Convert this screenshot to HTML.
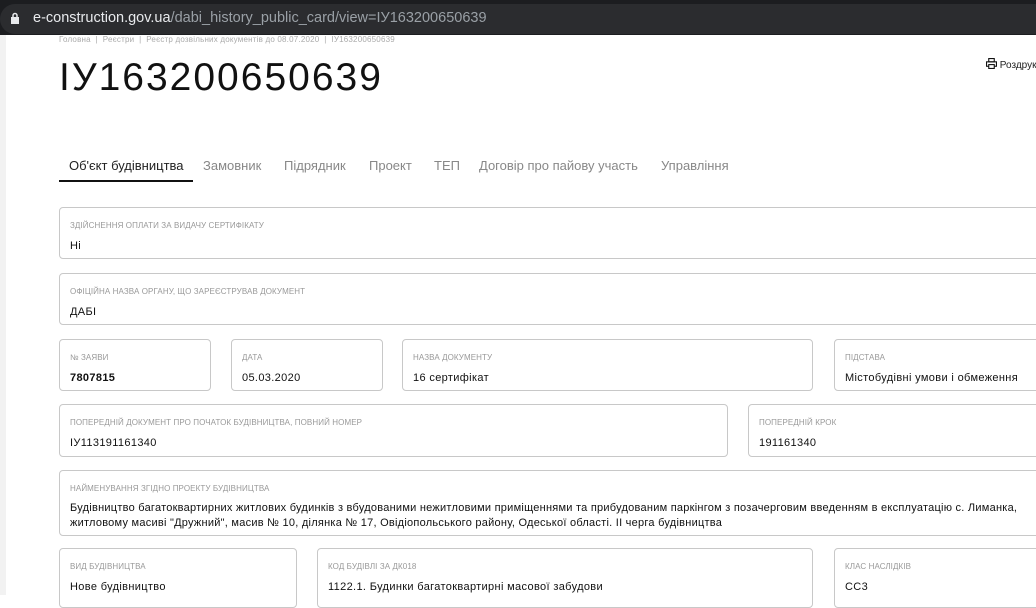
<!DOCTYPE html>
<html><head><meta charset="utf-8"><style>
*{margin:0;padding:0;box-sizing:border-box}
body{width:1036px;height:595px;overflow:hidden;background:#fff;font-family:"Liberation Sans",sans-serif;position:relative;color:#111}
.bar{position:absolute;left:0;top:0;width:1036px;height:35px;background:#1c1d20}
.url{position:absolute;left:0;top:4px;width:1036px;height:30px;background:#2b2c2f;border-radius:15px 0 0 15px}
.url span{position:absolute;left:33px;top:6px;font-size:14.5px;color:#e8eaed}
.url span i{font-style:normal;color:#9aa0a6}
.side{position:absolute;left:0;top:35px;width:6px;height:560px;background:#f2f2f2}
.bc{position:absolute;left:59px;top:35px;font-size:8px;color:#aaa;letter-spacing:0.2px;white-space:nowrap}
h1{position:absolute;left:59px;top:56px;font-size:39px;font-weight:400;letter-spacing:2px;color:#111;white-space:nowrap}
.pr{position:absolute;left:986px;top:58px;font-size:10px;color:#222;white-space:nowrap}
.tabs{position:absolute;top:158px;left:69px;font-size:13px;color:#888}
.tabs span{position:absolute;white-space:nowrap}
.ul{position:absolute;left:59px;top:180px;width:134px;height:2px;background:#111}
.b{position:absolute;border:1px solid #c8c8c8;border-radius:4px;background:#fff}
.b .l{position:absolute;left:10px;top:13px;font-size:8px;color:#999;text-transform:uppercase;white-space:nowrap;letter-spacing:0.1px}
.b .v{position:absolute;left:10px;top:32px;font-size:11px;color:#111;white-space:nowrap;letter-spacing:0.35px}
</style></head><body>
<div class="bar"><div class="url"><svg style="position:absolute;left:10px;top:8px" width="10" height="13" viewBox="0 0 10 13"><rect x="1" y="5" width="8" height="7" fill="#e8eaed"/><path d="M3 5V3.5a2 2 0 0 1 4 0V5" stroke="#e8eaed" stroke-width="1.5" fill="none"/></svg><span>e-construction.gov.ua<i>/dabi_history_public_card/view=ІУ163200650639</i></span></div></div>
<div class="side"></div>
<div class="bc">Головна &nbsp;|&nbsp; Реєстри &nbsp;|&nbsp; Реєстр дозвільних документів до 08.07.2020 &nbsp;|&nbsp; ІУ163200650639</div>
<h1>ІУ163200650639</h1>
<div class="pr"><svg width="11" height="11" viewBox="0 0 10 10" style="vertical-align:-1px"><rect x="2.5" y="0.5" width="5" height="3" fill="none" stroke="#111"/><rect x="0.5" y="3.5" width="9" height="4" fill="none" stroke="#111"/><rect x="2.5" y="6" width="5" height="3.5" fill="#fff" stroke="#111"/></svg> Роздрук</div>
<div class="tabs">
<span style="left:0;color:#222">Об'єкт будівництва</span>
<span style="left:134px">Замовник</span>
<span style="left:215px">Підрядник</span>
<span style="left:300px">Проект</span>
<span style="left:365px">ТЕП</span>
<span style="left:410px">Договір про пайову участь</span>
<span style="left:592px">Управління</span>
</div>
<div class="ul"></div>

<div class="b" style="left:59px;top:207px;width:990px;height:52px"><div class="l">Здійснення оплати за видачу сертифікату</div><div class="v">Ні</div></div>
<div class="b" style="left:59px;top:273px;width:990px;height:52px"><div class="l">Офіційна назва органу, що зареєстрував документ</div><div class="v">ДАБІ</div></div>

<div class="b" style="left:59px;top:339px;width:152px;height:52px"><div class="l">№ заяви</div><div class="v" style="font-weight:bold">7807815</div></div>
<div class="b" style="left:231px;top:339px;width:152px;height:52px"><div class="l">Дата</div><div class="v">05.03.2020</div></div>
<div class="b" style="left:402px;top:339px;width:411px;height:52px"><div class="l">Назва документу</div><div class="v">16 сертифікат</div></div>
<div class="b" style="left:834px;top:339px;width:220px;height:52px"><div class="l">Підстава</div><div class="v">Містобудівні умови і обмеження</div></div>

<div class="b" style="left:59px;top:404px;width:669px;height:53px"><div class="l">Попередній документ про початок будівництва, повний номер</div><div class="v">ІУ113191161340</div></div>
<div class="b" style="left:748px;top:404px;width:300px;height:53px"><div class="l">Попередній крок</div><div class="v">191161340</div></div>

<div class="b" style="left:59px;top:470px;width:990px;height:66px"><div class="l">Найменування згідно проекту будівництва</div><div class="v" style="line-height:15px;top:30px;letter-spacing:0.25px">Будівництво багатоквартирних житлових будинків з вбудованими нежитловими приміщеннями та прибудованим паркінгом з позачерговим введенням в експлуатацію с. Лиманка,<br>житловому масиві "Дружний", масив № 10, ділянка № 17, Овідіопольського району, Одеської області. ІІ черга будівництва</div></div>

<div class="b" style="left:59px;top:548px;width:238px;height:60px"><div class="l">Вид будівництва</div><div class="v">Нове будівництво</div></div>
<div class="b" style="left:317px;top:548px;width:496px;height:60px"><div class="l">Код будівлі за ДК018</div><div class="v">1122.1. Будинки багатоквартирні масової забудови</div></div>
<div class="b" style="left:834px;top:548px;width:220px;height:60px"><div class="l">Клас наслідків</div><div class="v">СС3</div></div>
</body></html>
